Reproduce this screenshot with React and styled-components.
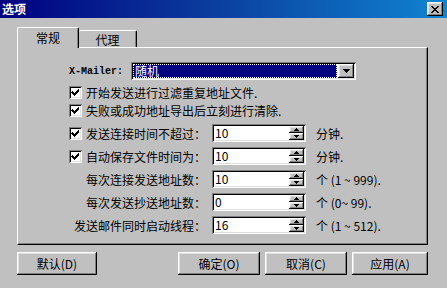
import React from 'react'
import styled, { createGlobalStyle } from 'styled-components'

const GlobalStyle = createGlobalStyle`
  html, body {
    margin: 0;
    padding: 0;
    background: #c0c0c0;
  }
  body {
    font-family: "Noto Sans CJK SC", "DejaVu Sans", sans-serif;
    font-size: 12px;
    color: #000;
  }
`;

const raised = `
  box-shadow: inset -1px -1px #000, inset 1px 1px #fff, inset -2px -2px #808080, inset 2px 2px #dfdfdf;
`;

const sunken = `
  box-shadow: inset 1px 1px #808080, inset -1px -1px #fff, inset 2px 2px #000, inset -2px -2px #dfdfdf;
`;

const Window = styled.div`
  width: 447px;
  height: 288px;
  background: #c0c0c0;
  display: flex;
  flex-direction: column;
  overflow: hidden;
`;

const TitleBar = styled.div`
  height: 18px;
  display: flex;
  align-items: center;
  justify-content: space-between;
  padding: 0 4px 0 2px;
  background: linear-gradient(to right, #000080 0%, #0a3a9c 45%, #1084d0 100%);
`;

const Title = styled.span`
  color: #fff;
  font-weight: 700;
  font-size: 12px;
  line-height: 18px;
`;

const CloseButton = styled.div`
  width: 16px;
  height: 14px;
  background: #c0c0c0;
  display: flex;
  align-items: center;
  justify-content: center;
  ${raised}
`;

const Body = styled.div`
  padding: 9px 19px 0 17px;
  display: flex;
  flex-direction: column;
`;

const TabStrip = styled.div`
  display: flex;
  align-items: flex-end;
  height: 20px;
`;

const Tab = styled.div`
  position: relative;
  z-index: ${p => (p.$active ? 2 : 1)};
  box-sizing: border-box;
  width: ${p => p.$w}px;
  height: ${p => (p.$active ? 21 : 17)}px;
  margin-bottom: ${p => (p.$active ? -1 : 0)}px;
  background: #c0c0c0;
  border-top: 1px solid #fff;
  border-left: ${p => (p.$joined ? 'none' : '1px solid #fff')};
  border-right: 1px solid #000;
  border-radius: 2px 2px 0 0;
  box-shadow: inset -1px 0 #808080;
  display: flex;
  align-items: center;
  justify-content: center;
  padding-bottom: ${p => (p.$active ? 2 : 0)}px;
  font-size: 12px;
`;

const Panel = styled.div`
  box-sizing: border-box;
  height: 198px;
  border-top: 1px solid #fff;
  border-left: 1px solid #fff;
  border-right: 1px solid #000;
  border-bottom: 1px solid #000;
  box-shadow: inset -1px -1px #808080;
  display: flex;
  flex-direction: column;
  padding: 14px 0 0 51px;
`;

const MailerRow = styled.div`
  display: flex;
  align-items: center;
  height: 18px;
`;

const MailerLabel = styled.span`
  width: 62px;
  font-family: "Liberation Mono", "DejaVu Sans Mono", monospace;
  font-size: 10px;
  font-weight: 700;
`;

const Combo = styled.div`
  box-sizing: border-box;
  width: 225px;
  height: 18px;
  background: #fff;
  padding: 2px;
  display: flex;
  ${sunken}
`;

const ComboValue = styled.div`
  flex: 1;
  background: #000080;
  color: #fff;
  outline: 1px dotted #fff;
  outline-offset: -1px;
  padding-left: 2px;
  line-height: 14px;
  margin-right: 1px;
`;

const DropButton = styled.div`
  width: 16px;
  height: 14px;
  background: #c0c0c0;
  display: flex;
  align-items: center;
  justify-content: center;
  ${raised}
`;

const CheckRow = styled.label`
  display: flex;
  align-items: center;
  gap: 4px;
  height: 16px;
  margin-top: ${p => p.$top}px;
  white-space: nowrap;
`;

const Box = styled.span`
  box-sizing: border-box;
  flex: none;
  width: 13px;
  height: 13px;
  background: #fff;
  display: inline-flex;
  ${sunken}
`;

const SpinRow = styled.div`
  display: flex;
  align-items: center;
  height: 18px;
  margin-top: ${p => p.$top}px;
`;

const SpinLabel = styled.div`
  width: 137px;
  display: flex;
  align-items: center;
  justify-content: space-between;
  white-space: nowrap;
`;

const LabelText = styled.span`
  margin-left: auto;
`;

const SpinBox = styled.div`
  box-sizing: border-box;
  width: 94px;
  height: 18px;
  margin-left: 6px;
  padding: 2px;
  background: #fff;
  display: flex;
  ${sunken}
`;

const SpinValue = styled.span`
  flex: 1;
  padding-left: 1px;
  line-height: 14px;
`;

const Spinner = styled.div`
  width: 15px;
  display: flex;
  flex-direction: column;
`;

const SpinBtn = styled.div`
  flex: 1;
  background: #c0c0c0;
  display: flex;
  align-items: center;
  justify-content: center;
  ${raised}
`;

const Unit = styled.span`
  margin-left: 10px;
  white-space: nowrap;
`;

const ButtonRow = styled.div`
  display: flex;
  justify-content: space-between;
  margin-top: 7px;
`;

const ButtonGroup = styled.div`
  display: flex;
  gap: 5px;
`;

const Button = styled.button`
  box-sizing: border-box;
  width: ${p => p.$w}px;
  height: 23px;
  border: none;
  background: #c0c0c0;
  font-family: inherit;
  font-size: 12px;
  color: #000;
  padding: 0;
  ${raised}
`;

const Check = () => (
  <Box>
    <svg width="13" height="13" viewBox="0 0 13 13" shapeRendering="crispEdges">
      <path d="M3 5h1v1h1v1h1v-1h1v-1h1v-1h1v-1h1v3h-1v1h-1v1h-1v1h-1v1h-1v-1h-1v-1h-1v-1h-1z" fill="#000" />
    </svg>
  </Box>
);

const Arrow = ({ up }) => (
  <svg width="5" height="3" viewBox="0 0 5 3" shapeRendering="crispEdges">
    <path d={up ? 'M2 0h1v1h1v1h1v1h-5v-1h1v-1h1z' : 'M0 0h5v1h-1v1h-1v1h-1v-1h-1v-1h-1z'} fill="#000" />
  </svg>
);

const spins = [
  { label: '发送连接时间不超过：', value: '10', unit: '分钟.', check: true },
  { label: '自动保存文件时间为：', value: '10', unit: '分钟.', check: true },
  { label: '每次连接发送地址数：', value: '10', unit: '个 (1 ~ 999).' },
  { label: '每次发送抄送地址数：', value: '0', unit: '个 (0~ 99).' },
  { label: '发送邮件同时启动线程：', value: '16', unit: '个 (1 ~ 512).' },
];

const App = () => {
  return (
    <Window>
      <GlobalStyle />
      <TitleBar>
        <Title>选项</Title>
        <CloseButton>
          <svg width="8" height="7" viewBox="0 0 8 7" shapeRendering="crispEdges">
            <path d="M0 0h2v1h1v1h2v-1h1v-1h2v1h-1v1h-1v1h-1v1h1v1h1v1h1v1h-2v-1h-1v-1h-2v1h-1v1h-2v-1h1v-1h1v-1h1v-1h-1v-1h-1v-1h-1z" fill="#000" />
          </svg>
        </CloseButton>
      </TitleBar>
      <Body>
        <TabStrip>
          <Tab $active $w={62}>常规</Tab>
          <Tab $joined $w={58}>代理</Tab>
        </TabStrip>
        <Panel>
          <MailerRow>
            <MailerLabel>X-Mailer:</MailerLabel>
            <Combo>
              <ComboValue>随机</ComboValue>
              <DropButton>
                <svg width="7" height="4" viewBox="0 0 7 4" shapeRendering="crispEdges">
                  <path d="M0 0h7v1h-1v1h-1v1h-1v1h-1v-1h-1v-1h-1v-1h-1z" fill="#000" />
                </svg>
              </DropButton>
            </Combo>
          </MailerRow>
          <CheckRow $top={4}><Check />开始发送进行过滤重复地址文件.</CheckRow>
          <CheckRow $top={2}><Check />失败或成功地址导出后立刻进行清除.</CheckRow>
          {spins.map((s, i) => (
            <SpinRow key={i} $top={i === 0 ? 6 : 5}>
              <SpinLabel>
                {s.check && <Check />}
                <LabelText>{s.label}</LabelText>
              </SpinLabel>
              <SpinBox>
                <SpinValue>{s.value}</SpinValue>
                <Spinner>
                  <SpinBtn><Arrow up /></SpinBtn>
                  <SpinBtn><Arrow /></SpinBtn>
                </Spinner>
              </SpinBox>
              <Unit>{s.unit}</Unit>
            </SpinRow>
          ))}
        </Panel>
        <ButtonRow>
          <Button $w={80}>默认(D)</Button>
          <ButtonGroup>
            <Button $w={82}>确定(O)</Button>
            <Button $w={82}>取消(C)</Button>
            <Button $w={76}>应用(A)</Button>
          </ButtonGroup>
        </ButtonRow>
      </Body>
    </Window>
  )
}

export default App
